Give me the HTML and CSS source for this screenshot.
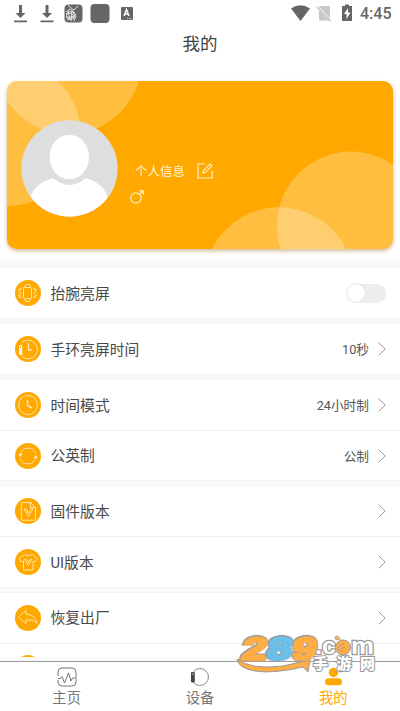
FILE: index.html
```html
<!DOCTYPE html>
<html lang="zh-CN">
<head>
<meta charset="utf-8">
<title>我的</title>
<link rel="stylesheet" href="styles.css">
</head>
<body>
<div class="app">
  <header class="status">
    <svg class="status-left" width="140" height="27" viewBox="0 0 140 27">
      <g fill="#666">
        <path d="M19 5h3v8h3.500l-5 5-5-5H19zM14 20.500h13v1.700H14zM45.500 5h3v8H52l-5 5-5-5h3.500zM40.500 20.500h13v1.700h-13z"/>
        <rect x="64.500" y="4.500" width="18" height="18" rx="4"/>
        <rect x="90.500" y="4" width="19" height="19" rx="4"/>
        <rect x="121" y="7" width="12" height="13" rx="1"/>
      </g>
      <g fill="none" stroke="#eee">
        <path d="M68 5l3 3 3 2 4-4M66 12l4-3 4 3 2 4-2 5M66 14l5-1 3 3-7 4M68 11l2 9M72 11l-1 10M66 17h9" stroke-width=".9"/>
        <circle cx="70.500" cy="15.500" r="4" stroke-width=".9"/>
        <path d="M124 16l2.500-6.500L129 16M125 14h3" stroke="#fff" stroke-width="1.400"/>
        <path d="M127 18.500h5" stroke-width=".8" stroke-dasharray="1 .6"/>
      </g>
    </svg>
    <svg class="status-right" width="64" height="27" viewBox="290 0 64 27">
      <path d="M291 8.500q9.500-6.500 19 0L300.500 21z" fill="#666"/>
      <path d="M319 7q0-1 1-1h9q1 0 1 1v13.500h-11z" fill="#c8c8c8"/>
      <path d="M316.500 6l14 14.500" stroke="#fff" stroke-width="2.500"/>
      <path d="M317 7l13.500 14" stroke="#bbb" stroke-width="1.200"/>
      <path d="M342 6h3V4.500h4V6h3v15h-10z" fill="#666"/>
      <path d="M348 8l-4 6h2.500v5l4-6.500H348z" fill="#fff"/>
    </svg>
    <span class="clock">4:45</span>
  </header>
  <h1 class="title">我的</h1>

  <section class="card">
    <svg class="bubbles" width="386" height="168" viewBox="7 81 386 168">
      <g fill="#fff" fill-opacity=".25">
        <circle cx="8" cy="133.500" r="72.500"/>
        <circle cx="68.500" cy="61" r="73"/>
        <circle cx="351" cy="225.500" r="74"/>
        <circle cx="279" cy="282" r="74.700"/>
      </g>
    </svg>
    <svg class="avatar" width="97" height="97" viewBox="0 0 97 97">
      <defs><clipPath id="face"><circle cx="48.500" cy="48.500" r="48"/></clipPath></defs>
      <circle cx="48.500" cy="48.500" r="48.200" fill="#dedede"/>
      <g clip-path="url(#face)" fill="#fff">
        <ellipse cx="48.300" cy="37" rx="19.700" ry="22.200"/>
        <path d="M9 79Q12 64 32 58Q48 72 65 58Q84 64 87 79L76 97H18z"/>
      </g>
    </svg>
    <div class="profile">
      <div class="profile-name">
        <span>个人信息</span>
        <svg width="16" height="16" viewBox="0 0 16 16" fill="none" stroke="#fff0c0" stroke-width="1.200">
          <path d="M8 1H1v14h14V8M6 10l.6-2.700L13 1l2 1.800-6.400 6.500z"/>
        </svg>
      </div>
      <svg class="gender" width="14" height="14" viewBox="0 0 14 14" fill="none" stroke="#fff0c0" stroke-width="1.200">
        <circle cx="5.900" cy="8" r="5.200"/><path d="M9.500 4.300L13 .8M9.300.8H13.200v3.900"/>
      </svg>
    </div>
  </section>

  <main class="list">
    <div class="group">
      <div class="row">
        <svg class="icon" viewBox="0 0 26 26">
          <circle cx="13" cy="13" r="13"/>
          <g class="line"><path d="M9.500 7.500l1-3h4l1 3M9.500 18.500l1 3h4l1-3"/><rect x="8.500" y="7.500" width="8" height="11" rx="1"/><path d="M7 9L5 8v3l-2-1M7 13H3.500M7 17l-2 1v-3l-2 1M18 9l2-1v3l2-1M18 13h3.500M18 17l2 1v-3l2 1"/></g>
        </svg>
        <span class="label">抬腕亮屏</span><span class="switch"></span>
      </div>
    </div>
    <div class="group">
      <div class="row">
        <svg class="icon" viewBox="0 0 26 26">
          <circle cx="13" cy="13" r="13"/>
          <g class="line"><path d="M7 6.500A9.300 9.300 0 1 1 7 20.500"/><path d="M13.500 7v7H17" stroke-width="1.300"/><path d="M5.700 9v10" stroke="#fff" stroke-width="3"/><path d="M5.500 10v2" stroke="#ffa800"/></g>
        </svg>
        <span class="label">手环亮屏时间</span><span class="value">10秒</span><svg class="arrow" viewBox="0 0 8 14"><path d="M.7.700L7.200 7 .7 13.300"/></svg>
      </div>
    </div>
    <div class="group">
      <div class="row">
        <svg class="icon" viewBox="0 0 26 26">
          <circle cx="13" cy="13" r="13"/>
          <g class="line"><circle cx="13" cy="13" r="9.500"/><path d="M12.500 8v5.500L17 16" stroke-width="1.500"/></g>
        </svg>
        <span class="label">时间模式</span><span class="value">24小时制</span><svg class="arrow" viewBox="0 0 8 14"><path d="M.7.700L7.200 7 .7 13.300"/></svg>
      </div>
      <div class="row">
        <svg class="icon" viewBox="0 0 26 26">
          <circle cx="13" cy="13" r="13"/>
          <g class="line"><path d="M5 12A8.200 8.200 0 0 1 20.800 10.500M21 14A8.200 8.200 0 0 1 5.200 15.500"/></g>
          <path d="M3.500 11h4L5.300 14zM18.700 15h4L21 12z" fill="#fff0c8"/>
        </svg>
        <span class="label">公英制</span><span class="value">公制</span><svg class="arrow" viewBox="0 0 8 14"><path d="M.7.700L7.200 7 .7 13.300"/></svg>
      </div>
    </div>
    <div class="group">
      <div class="row">
        <svg class="icon" viewBox="0 0 26 26">
          <circle cx="13" cy="13" r="13"/>
          <g class="line"><path d="M7 4.500h8.500l5 5V21.500q0 .7-.7.700H7q-.7 0-.7-.7V5.200q0-.7.7-.7zM15.500 4.500v5h5M9 11h2l2.500 4 2.500-4h2l-4.500 7.500zM11 11l2.500 4"/></g>
        </svg>
        <span class="label">固件版本</span><svg class="arrow" viewBox="0 0 8 14"><path d="M.7.700L7.200 7 .7 13.300"/></svg>
      </div>
      <div class="row">
        <svg class="icon" viewBox="0 0 26 26">
          <circle cx="13" cy="13" r="13"/>
          <g class="line"><path d="M9.500 5.500q4 2.500 8 0l5 4-2.200 3.500-2.300-1V21H8.500v-9l-2.300 1L4 9.500zM9.700 10.500h1.800l1.800 3 1.800-3h1.800l-3.600 6z"/></g>
        </svg>
        <span class="label">UI版本</span><svg class="arrow" viewBox="0 0 8 14"><path d="M.7.700L7.200 7 .7 13.300"/></svg>
      </div>
    </div>
    <div class="group">
      <div class="row">
        <svg class="icon" viewBox="0 0 26 26">
          <circle cx="13" cy="13" r="13"/>
          <path class="line" d="M3.500 12L11 5.500v3.700q9.500.3 11 9-4-4-11-3.200v3.500z"/>
        </svg>
        <span class="label">恢复出厂</span><svg class="arrow" viewBox="0 0 8 14"><path d="M.7.700L7.200 7 .7 13.300"/></svg>
      </div>
      <div class="row">
        <svg class="icon" viewBox="0 0 26 26"><circle cx="13" cy="13" r="13"/></svg>
      </div>
    </div>
  </main>

  <nav class="tabs">
    <div class="tab">
      <svg width="20" height="20" viewBox="0 0 20 20" fill="none" stroke="#777" stroke-width="1">
        <path d="M1 9V5q0-4 4-4h10q4 0 4 4v10q0 4-4 4H5q-4 0-4-4v-2M1 11.500h2.500l1.500-2 2.500 6.500 4-10 2.500 8 1.500-3h2.500"/>
      </svg>
      <span>主页</span>
    </div>
    <div class="tab">
      <svg width="20" height="20" viewBox="0 0 20 20">
        <path d="M3.500 4.500A8.500 8.500 0 1 1 3.500 15.500" fill="none" stroke="#888"/>
        <rect x="1" y="5" width="3.800" height="10.500" rx="1" fill="#444"/><path d="M2 7h1.600" stroke="#ddd"/>
      </svg>
      <span>设备</span>
    </div>
    <div class="tab active">
      <svg width="20" height="20" viewBox="0 0 20 20" fill="#ffa800">
        <circle cx="10.500" cy="5.500" r="4.700"/><rect x="2" y="11.200" width="17" height="7" rx="3.500"/>
      </svg>
      <span>我的</span>
    </div>
  </nav>

  <svg class="brand" width="144" height="44" viewBox="235 632 144 44">
    <path d="M237 659q14 11 46 7l22-5 5-2-2 13-5-5q-30 7-48 4-17-3-18-12z" fill="#ffad45" stroke="#999"/>
    <g class="digits" transform="translate(239 659.500) skewX(-10)">
      <text x="2" y="0" textLength="24" lengthAdjust="spacingAndGlyphs" fill="#ffad45" stroke="#ffad45">2</text>
      <text x="52" y="0" textLength="24" lengthAdjust="spacingAndGlyphs" fill="#ffad45" stroke="#ffad45">9</text>
    </g>
    <g class="digits" transform="translate(239 659.500) skewX(-10)">
      <text x="27" y="0" textLength="24" lengthAdjust="spacingAndGlyphs" fill="#6bbfe9" stroke="#6bbfe9">8</text>
    </g>
    <text class="com" x="315" y="654" textLength="21" lengthAdjust="spacingAndGlyphs">.c</text>
    <text class="com" x="351" y="654" textLength="23" lengthAdjust="spacingAndGlyphs">m</text>
    <circle cx="343" cy="647.500" r="7.500" fill="#ffad45" stroke="#999"/>
    <path d="M339 651q-2-6 5-7M342 652q-2-4 3-5M335 637q3 3 6 2" fill="none" stroke="#999"/>
    <circle cx="337" cy="638" r="2" fill="#ffad45" stroke="#999" stroke-width=".6"/>
    <text class="cn" x="313" y="669" textLength="62">手游网</text>
  </svg>
</div>
</body>
</html>
```
FILE: styles.css
```css
* { box-sizing: border-box; }
body { margin: 0; background: #fff; }
svg { display: block; flex: none; }
.app {
  position: relative;
  width: 400px;
  height: 711px;
  overflow: hidden;
  display: flex;
  flex-direction: column;
  font-family: Roboto, "Noto Sans CJK SC", sans-serif;
  color: #555;
}
.status { display: flex; height: 27px; flex: none; }
.status-right { margin-left: 150px; }
.clock {
  margin-left: 6px;
  font-size: 16px;
  line-height: 28px;
  font-weight: 500;
  color: #666;
}
.title {
  margin: 0;
  height: 54px;
  flex: none;
  text-align: center;
  font-size: 17.5px;
  font-weight: 400;
  line-height: 34px;
  color: #444;
}
.card {
  position: relative;
  flex: none;
  display: flex;
  width: 386px;
  height: 168px;
  margin: 0 7px 10px;
  padding: 39px 0 0 14px;
  border-radius: 10px;
  background: #ffa800;
  box-shadow: 0 2px 4px rgba(150, 105, 10, .45);
}
.bubbles { position: absolute; top: 0; left: 0; border-radius: 10px; }
.avatar { position: relative; }
.profile { position: relative; margin: 41px 0 0 12px; }
.profile-name {
  display: flex;
  align-items: center;
  gap: 12px;
  height: 19px;
  padding-left: 5px;
  font-size: 12.5px;
  color: #fff4cc;
}
.gender { margin-top: 10px; }
.list {
  flex: none;
  height: 402px;
  overflow: hidden;
  background: #f9f9f9;
  border-bottom: 4px solid #f9f9f9;
}
.group { margin-top: 6px; background: #fff; box-shadow: 0 0 1px #ddd; }
.group:first-child { margin-top: 9px; }
.row {
  display: flex;
  align-items: center;
  height: 50.1px;
  padding: 0 14px 0 15px;
}
.row + .row { border-top: 1px solid #eee; }
.icon { width: 26px; height: 26px; fill: #ffa800; }
.line { fill: none; stroke: #ffe6a8; stroke-width: 1; stroke-linejoin: round; }
.label {
  flex: 1;
  margin-left: 9.5px;
  padding-bottom: 2px;
  font-size: 14.8px;
  color: #4a4a4a;
}
.value { margin-right: 9px; padding-bottom: 1px; font-size: 12.7px; }
.arrow { width: 8px; height: 14px; fill: none; stroke: #999; }
.switch {
  width: 39px;
  height: 19px;
  border-radius: 10px;
  background: #eee;
}
.switch::before {
  content: "";
  display: block;
  width: 18px;
  height: 18px;
  border-radius: 50%;
  background: #fff;
  box-shadow: 0 0 2px #ccc;
}
.tabs {
  flex: 1;
  display: grid;
  grid-template-columns: repeat(3, 1fr);
  border-top: 1px solid #999;
  background: #fff;
}
.tab {
  display: flex;
  flex-direction: column;
  align-items: center;
  padding-top: 5px;
  font-size: 14.3px;
  line-height: 22px;
  color: #777;
}
.active { color: #ffa800; }
.brand { position: absolute; left: 235px; top: 632px; overflow: visible; }
.digits {
  font: 700 31px "Liberation Sans", sans-serif;
  stroke-width: 2.8px;
  filter: drop-shadow(.8px 0 0 #999) drop-shadow(-.8px 0 0 #999) drop-shadow(0 .8px 0 #999) drop-shadow(0 -.8px 0 #999);
}
.com {
  font: 700 24px "Liberation Sans", sans-serif;
  fill: #fff;
  stroke: #999;
  stroke-width: 2.5px;
  paint-order: stroke;
}
.cn {
  font: 900 15px "Noto Sans CJK SC", sans-serif;
  fill: #fff;
  stroke: #999;
  stroke-width: 2px;
  paint-order: stroke;
}
```
